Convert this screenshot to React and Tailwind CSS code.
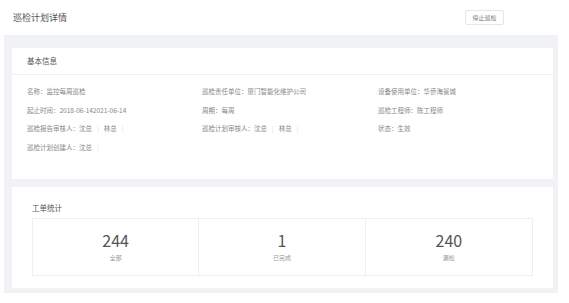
const rows = [
  [
    { label: '名称', value: '监控每周巡检' },
    { label: '巡检责任单位', value: '厦门智能化维护公司' },
    { label: '设备使用单位', value: '华侨海景城' },
  ],
  [
    { label: '起止时间', value: '2018-06-142021-06-14' },
    { label: '周期', value: '每周' },
    { label: '巡检工程师', value: '陈工程师' },
  ],
  [
    { label: '巡检报告审核人', people: ['沈总', '林总'] },
    { label: '巡检计划审核人', people: ['沈总', '林总'] },
    { label: '状态', value: '生效' },
  ],
  [{ label: '巡检计划创建人', people: ['沈总'] }],
];

const stats = [
  { count: 244, label: '全部' },
  { count: 1, label: '已完成' },
  { count: 240, label: '漏检' },
];

const Field = ({ item }) => (
  <div className="whitespace-nowrap">
    <span>{item.label}：</span>
    {item.people
      ? item.people.map((p) => (
          <span key={p}>
            {p}
            <span className="mx-[5px] text-[#e0e0e0]">|</span>
          </span>
        ))
      : <span>{item.value}</span>}
  </div>
);

const App = () => {
  return (
    <div
      className="w-[569px] h-[303px] bg-white overflow-hidden"
      style={{ fontFamily: '"Noto Sans CJK SC", "Noto Sans", sans-serif' }}
    >
      {/* Header */}
      <div className="h-[35px] flex items-center justify-between pl-[13px] pr-[65px]">
        <h1 className="text-[9px] text-[#555] leading-none">巡检计划详情</h1>
        <button className="w-[39px] h-[15px] border border-[#e6e6e6] rounded-[2px] bg-white text-[6px] text-[#777] leading-none">
          停止巡检
        </button>
      </div>

      {/* Content */}
      <div className="ml-[4px] mr-[11px] bg-[#f0f2f5] pt-[13px] pl-[8px] pr-[5px] pb-[5px] flex flex-col gap-[8px]">
        {/* Basic info */}
        <section className="bg-white h-[131px]">
          <div className="h-[27px] flex items-center px-[15px] border-b border-[#eeeeee]">
            <h2 className="text-[7.5px] text-[#555] leading-none">基本信息</h2>
          </div>
          <div className="px-[15px] pt-[8px] text-[6.5px] text-[#888]">
            {rows.map((row, i) => (
              <div key={i} className="grid grid-cols-[175px_176px_1fr] h-[18.5px] items-center">
                {row.map((item) => (
                  <Field key={item.label} item={item} />
                ))}
              </div>
            ))}
          </div>
        </section>

        {/* Work order stats */}
        <section className="bg-white h-[101px] px-[20px] pt-[17px]">
          <h2 className="text-[7.5px] text-[#555] leading-none mb-[6px]">工单统计</h2>
          <div className="grid grid-cols-3 border border-[#eeeeee] h-[58px]">
            {stats.map((s, i) => (
              <div
                key={s.label}
                className={`flex flex-col items-center justify-center ${i < 2 ? 'border-r border-[#eeeeee]' : ''}`}
              >
                <div className="text-[16px] text-[#555] leading-none">{s.count}</div>
                <div className="text-[6px] text-[#999] leading-none mt-[7px]">{s.label}</div>
              </div>
            ))}
          </div>
        </section>
      </div>
    </div>
  );
};

export default App;
